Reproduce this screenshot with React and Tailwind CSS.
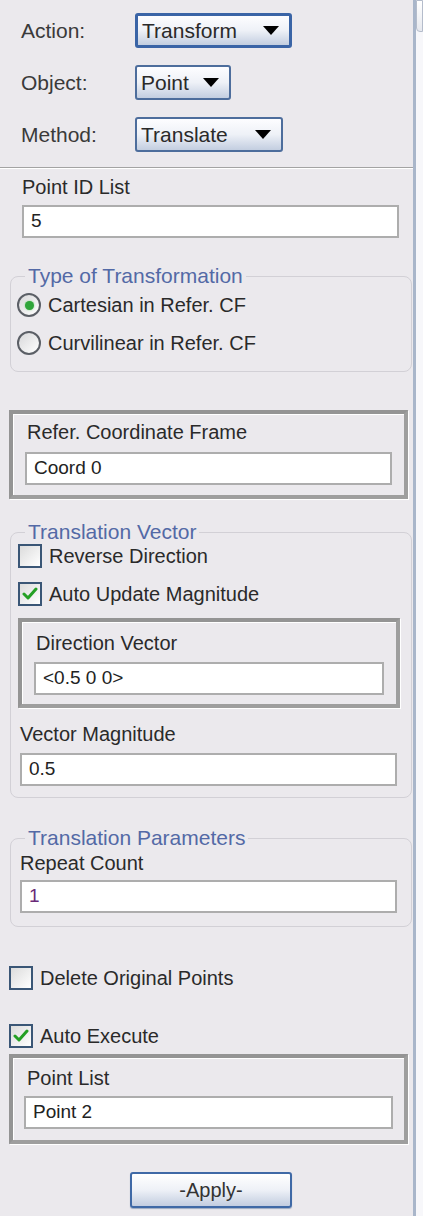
import React from "react";

const Arrow = () => (
  <svg width="16" height="10" viewBox="0 0 16 10">
    <polygon points="0,0 16,0 8,9" fill="#000" />
  </svg>
);

const Dropdown = ({ value, width, focused }) => (
  <div
    className={
      "h-[35px] flex items-center justify-between pl-[4px] pr-[10px] rounded-[3px] bg-gradient-to-b from-[#fdfdff] via-[#eef1f7] to-[#c3cee0] text-[21px] text-[#2a2a2a] " +
      (focused ? "border-[3px] border-[#3a64a6]" : "border-2 border-[#4d6d9c]")
    }
    style={{ width }}
  >
    <span>{value}</span>
    <Arrow />
  </div>
);

const TextBox = ({ value, className = "", textColor = "text-[#222]" }) => (
  <div
    className={
      "h-[33px] bg-white border-2 border-[#adadad] flex items-center pl-[7px] text-[19px] " +
      textColor +
      " " +
      className
    }
  >
    {value}
  </div>
);

const Frame = ({ children, className = "" }) => (
  <div
    className={
      "border-[4px] border-t-[#949494] border-l-[#949494] border-r-[#9e9e9e] border-b-[#9e9e9e] shadow-[1px_1px_0_#ffffff,inset_1px_1px_0_#ffffff] " +
      className
    }
  >
    {children}
  </div>
);

const Group = ({ title, children, className = "" }) => (
  <fieldset
    className={
      "border border-[#d2d0d6] rounded-[8px] ml-[10px] w-[402px] " + className
    }
  >
    <legend className="ml-[14px] px-[3px] text-[21px] leading-[22px] text-[#5369a6]">
      {title}
    </legend>
    {children}
  </fieldset>
);

const CheckBox = ({ checked }) => (
  <div className="w-[24px] h-[24px] border-2 border-[#3a5676] bg-gradient-to-br from-[#dcdcdc] to-[#ffffff] flex items-center justify-center shrink-0">
    {checked && (
      <svg width="16" height="14" viewBox="0 0 16 14">
        <path
          d="M2 7 L6 11 L14 2"
          fill="none"
          stroke="#24a024"
          strokeWidth="3"
          strokeLinecap="round"
          strokeLinejoin="round"
        />
      </svg>
    )}
  </div>
);

const Radio = ({ checked }) => (
  <div className="w-[24px] h-[24px] rounded-full border-2 border-[#5b5f66] bg-gradient-to-br from-[#d8d8da] to-[#ffffff] flex items-center justify-center shrink-0">
    {checked && (
      <div className="w-[9px] h-[9px] rounded-full bg-[#2fa53a] shadow-[0_0_2px_#7fd67f]" />
    )}
  </div>
);

const Label = ({ children, className = "" }) => (
  <div className={"text-[20px] leading-[22px] text-[#2a2a2a] " + className}>
    {children}
  </div>
);

const App = () => {
  return (
    <div className="w-[423px] h-[1216px] flex bg-[#ebe9ed] font-['Liberation_Sans',Arial,sans-serif] overflow-hidden">
      <div className="w-[413px] flex flex-col">
        {/* top selectors */}
        <div className="mt-[13px] flex items-center">
          <div className="w-[135px] pl-[21px] text-[21px] text-[#3a3a3a]">Action:</div>
          <Dropdown value="Transform" width={157} focused />
        </div>
        <div className="mt-[17px] flex items-center">
          <div className="w-[135px] pl-[21px] text-[21px] text-[#3a3a3a]">Object:</div>
          <Dropdown value="Point" width={96} />
        </div>
        <div className="mt-[17px] flex items-center">
          <div className="w-[135px] pl-[21px] text-[21px] text-[#3a3a3a]">Method:</div>
          <Dropdown value="Translate" width={148} />
        </div>
        <div className="mt-[15px] h-[2px] border-t border-[#a3a3a3] border-b border-b-white" />

        {/* point id list */}
        <Label className="mt-[7px] pl-[22px]">Point ID List</Label>
        <TextBox value="5" className="mt-[7px] ml-[22px] w-[377px]" />

        <Group title="Type of Transformation" className="mt-[27px] pb-[15px]">
          <div className="mt-[5px] pl-[6px] h-[26px] flex items-center gap-[7px]">
            <Radio checked />
            <Label>Cartesian in Refer. CF</Label>
          </div>
          <div className="mt-[12px] pl-[6px] h-[26px] flex items-center gap-[7px]">
            <Radio />
            <Label>Curvilinear in Refer. CF</Label>
          </div>
        </Group>

        <Frame className="mt-[38px] ml-[9px] w-[399px] pt-[7px] pb-[10px] px-[12px]">
          <Label className="pl-[2px]">Refer. Coordinate Frame</Label>
          <TextBox value="Coord 0" className="mt-[9px] h-[31px]" />
        </Frame>

        <Group title="Translation Vector" className="mt-[22px] pb-[11px]">
          <div className="mt-[1px] pl-[7px] h-[24px] flex items-center gap-[7px]">
            <CheckBox />
            <Label>Reverse Direction</Label>
          </div>
          <div className="mt-[14px] pl-[7px] h-[24px] flex items-center gap-[7px]">
            <CheckBox checked />
            <Label>Auto Update Magnitude</Label>
          </div>
          <Frame className="mt-[12px] ml-[7px] w-[382px] pt-[10px] pb-[9px] px-[12px]">
            <Label className="pl-[2px]">Direction Vector</Label>
            <TextBox value="<0.5 0 0>" className="mt-[8px] h-[32px]" />
          </Frame>
          <Label className="mt-[15px] pl-[9px]">Vector Magnitude</Label>
          <TextBox value="0.5" className="mt-[8px] ml-[9px] w-[377px] h-[31px]" />
        </Group>

        <Group title="Translation Parameters" className="mt-[29px] pb-[13px]">
          <Label className="mt-[3px] pl-[9px]">Repeat Count</Label>
          <TextBox
            value="1"
            textColor="text-[#6a2a78]"
            className="mt-[6px] ml-[9px] w-[377px]"
          />
        </Group>

        <div className="mt-[39px] ml-[9px] h-[24px] flex items-center gap-[7px]">
          <CheckBox />
          <Label>Delete Original Points</Label>
        </div>
        <div className="mt-[34px] ml-[9px] h-[24px] flex items-center gap-[7px]">
          <CheckBox checked />
          <Label>Auto Execute</Label>
        </div>

        <Frame className="mt-[6px] ml-[9px] w-[399px] pt-[9px] pb-[11px] px-[11px]">
          <Label className="pl-[3px]">Point List</Label>
          <TextBox value="Point 2" className="mt-[7px] h-[32px]" />
        </Frame>

        <button className="mt-[28px] ml-[130px] w-[162px] h-[36px] rounded-[3px] border-2 border-[#3f69a6] bg-gradient-to-b from-[#ffffff] via-[#eef1f7] to-[#c2cde0] text-[20px] text-[#333] shadow-[0_1px_1px_#9aa9c0]">
          -Apply-
        </button>
      </div>

      {/* scroll strip on the right */}
      <div className="w-[10px] border-l-[3px] border-[#a9b6ca] bg-[#f7f7fa] flex flex-col">
        <div className="h-[32px] border border-[#b4bccb] rounded-bl-[4px] bg-gradient-to-b from-[#ffffff] to-[#e6e8ee]" />
      </div>
    </div>
  );
};

export default App;
